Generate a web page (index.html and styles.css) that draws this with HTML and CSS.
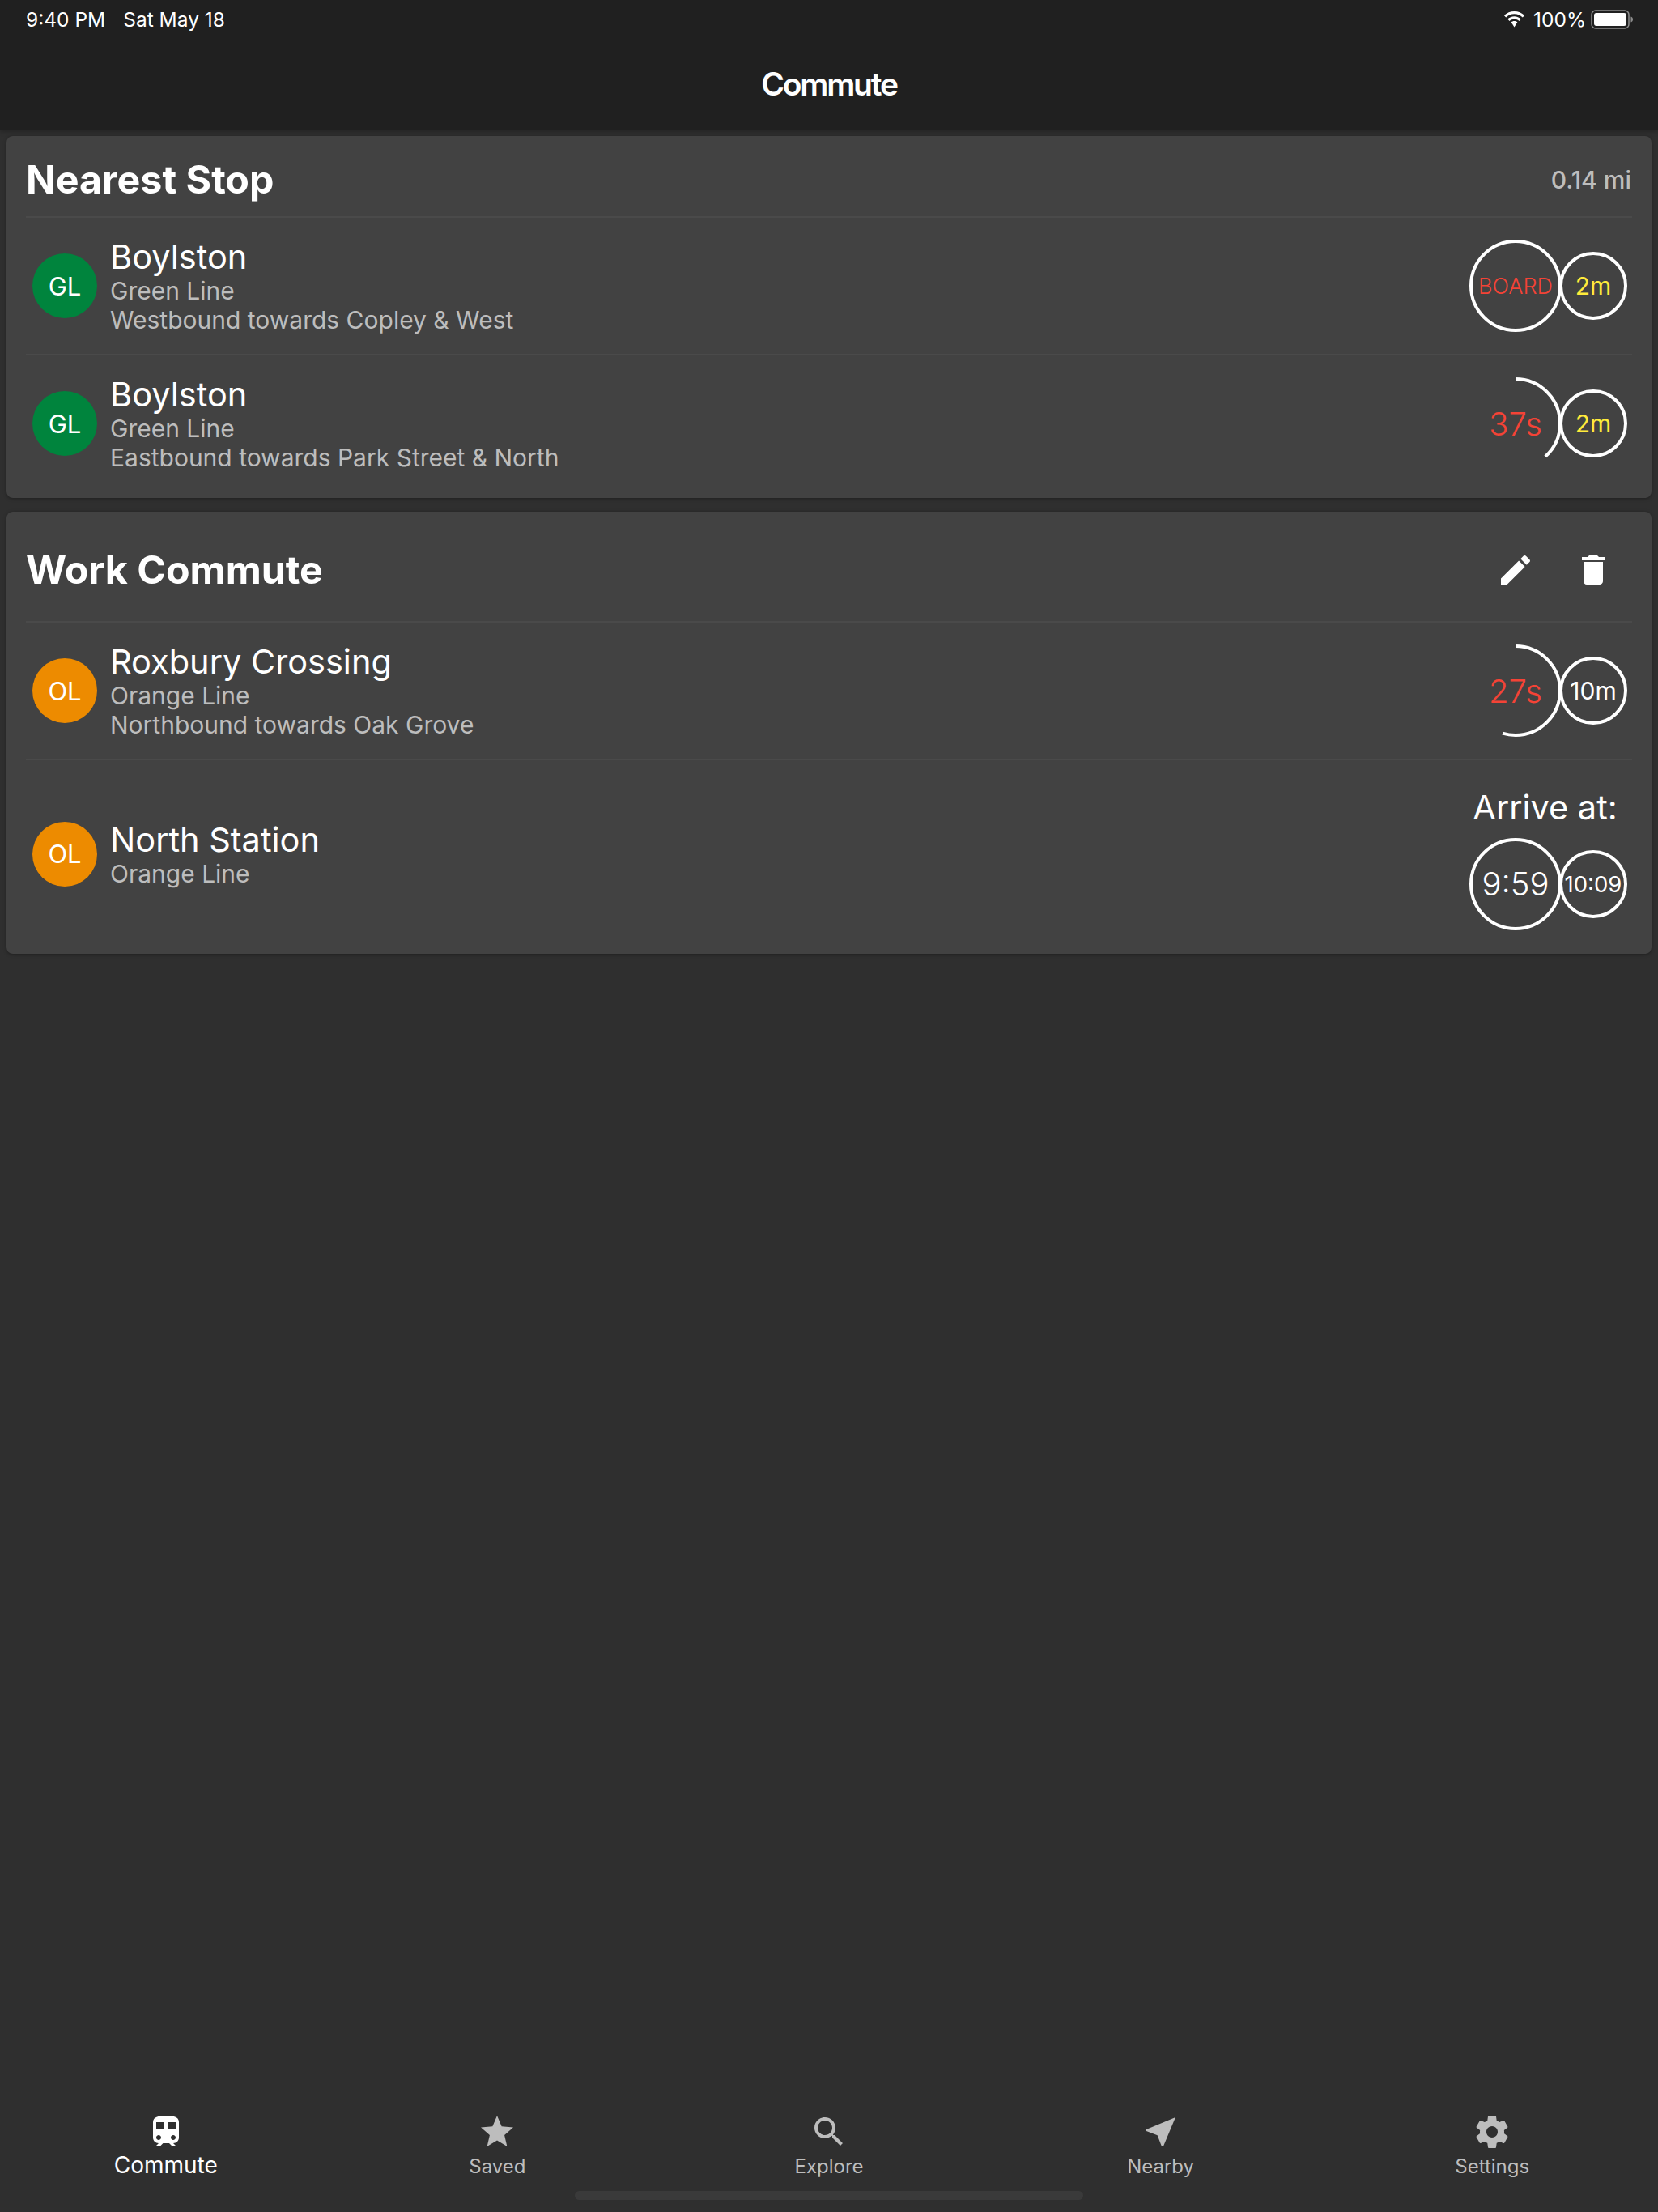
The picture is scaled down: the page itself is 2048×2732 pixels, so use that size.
FILE: index.html
```html
<!DOCTYPE html>
<html lang="en">
<head>
    <meta charset="UTF-8">
    <meta name="viewport" content="width=device-width, initial-scale=1.0">
    <title>Commute</title>
    <link rel="stylesheet" href="styles.css">
</head>
<body>
    <header class="app-header">
        <div class="status-bar">
            <div class="status-left">
                <span>9:40 PM</span>
                <span>Sat May 18</span>
            </div>
            <div class="status-right">
                <svg class="wifi" viewBox="0 0 27 19" width="29" height="20">
                    <path d="M13.5 3.2c3.8 0 7.2 1.5 9.8 3.9l2.2-2.4C22.3 1.8 18.1 0 13.5 0S4.7 1.8 1.500 4.700l2.200 2.400c2.600-2.400 6-3.900 9.800-3.900z" fill="#fff"/>
                    <path d="M13.500 9.300c2.200 0 4.200.8 5.700 2.200l2.200-2.400c-2.100-1.900-4.900-3.100-7.900-3.100s-5.800 1.200-7.900 3.100l2.200 2.400c1.500-1.400 3.500-2.200 5.700-2.200z" fill="#fff"/>
                    <path d="M13.500 11.500c-1.400 0-2.600.5-3.600 1.400l3.600 5.600 3.600-5.600c-1-.9-2.200-1.400-3.600-1.400z" fill="#fff"/>
                </svg>
                <span class="battery-level">100%</span>
                <svg class="battery" viewBox="0 0 53 24" width="53" height="24">
                    <rect x="1" y="1" width="46" height="22" rx="5" fill="none" stroke="#8c8c8c" stroke-width="1.500"/>
                    <rect x="4" y="4" width="40" height="16" rx="3" fill="#fff"/>
                    <path d="M49.500 8.500c1.500.4 2.500 1.800 2.500 3.500s-1 3.100-2.500 3.500z" fill="#8c8c8c"/>
                </svg>
            </div>
        </div>
        <h1 class="app-title">Commute</h1>
    </header>

    <main class="content">
        <section class="card">
            <div class="card-head head-nearest">
                <h2>Nearest Stop</h2>
                <span class="distance">0.14 mi</span>
            </div>
            <div class="row">
                <div class="line-badge green">GL</div>
                <div class="stop-info">
                    <div class="stop-name">Boylston</div>
                    <div class="stop-sub">Green Line</div>
                    <div class="stop-sub">Westbound towards Copley &amp; West</div>
                </div>
                <div class="times">
                    <div class="ring ring-big">
                        <svg viewBox="0 0 114 114"><circle cx="57" cy="57" r="55" class="ring-line"/></svg>
                        <span class="ring-text board red">BOARD</span>
                    </div>
                    <div class="ring ring-small">
                        <svg viewBox="0 0 84 84"><circle cx="42" cy="42" r="40" class="ring-line"/></svg>
                        <span class="ring-text yellow">2m</span>
                    </div>
                </div>
            </div>
            <div class="row">
                <div class="line-badge green">GL</div>
                <div class="stop-info">
                    <div class="stop-name">Boylston</div>
                    <div class="stop-sub">Green Line</div>
                    <div class="stop-sub">Eastbound towards Park Street &amp; North</div>
                </div>
                <div class="times">
                    <div class="ring ring-big">
                        <svg viewBox="0 0 114 114"><circle cx="57" cy="57" r="55" class="ring-line" pathLength="360" stroke-dasharray="138 360" transform="rotate(-90 57 57)"/></svg>
                        <span class="ring-text big-text red">37s</span>
                    </div>
                    <div class="ring ring-small">
                        <svg viewBox="0 0 84 84"><circle cx="42" cy="42" r="40" class="ring-line"/></svg>
                        <span class="ring-text yellow">2m</span>
                    </div>
                </div>
            </div>
        </section>

        <section class="card">
            <div class="card-head head-work">
                <h2>Work Commute</h2>
                <div class="actions">
                    <svg viewBox="0 0 24 24" width="48" height="48"><path fill="#fff" d="M3 17.250V21h3.750L17.810 9.940l-3.750-3.750L3 17.250zM20.710 7.040c.39-.39.39-1.020 0-1.410l-2.340-2.340c-.39-.39-1.020-.39-1.410 0l-1.830 1.830 3.750 3.750 1.830-1.830z"/></svg>
                    <svg viewBox="0 0 24 24" width="48" height="48"><path fill="#fff" d="M6 19c0 1.100.9 2 2 2h8c1.100 0 2-.9 2-2V7H6v12zM19 4h-3.500l-1-1h-5l-1 1H5v2h14V4z"/></svg>
                </div>
            </div>
            <div class="row">
                <div class="line-badge orange">OL</div>
                <div class="stop-info">
                    <div class="stop-name">Roxbury Crossing</div>
                    <div class="stop-sub">Orange Line</div>
                    <div class="stop-sub">Northbound towards Oak Grove</div>
                </div>
                <div class="times">
                    <div class="ring ring-big">
                        <svg viewBox="0 0 114 114"><circle cx="57" cy="57" r="55" class="ring-line" pathLength="360" stroke-dasharray="197 360" transform="rotate(-90 57 57)"/></svg>
                        <span class="ring-text big-text red">27s</span>
                    </div>
                    <div class="ring ring-small">
                        <svg viewBox="0 0 84 84"><circle cx="42" cy="42" r="40" class="ring-line"/></svg>
                        <span class="ring-text">10m</span>
                    </div>
                </div>
            </div>
            <div class="row row-tall">
                <div class="line-badge orange">OL</div>
                <div class="stop-info">
                    <div class="stop-name">North Station</div>
                    <div class="stop-sub">Orange Line</div>
                </div>
                <div class="arrive">
                    <div class="arrive-label">Arrive at:</div>
                    <div class="times">
                        <div class="ring ring-big">
                            <svg viewBox="0 0 114 114"><circle cx="57" cy="57" r="55" class="ring-line"/></svg>
                            <span class="ring-text big-text">9:59</span>
                        </div>
                        <div class="ring ring-small">
                            <svg viewBox="0 0 84 84"><circle cx="42" cy="42" r="40" class="ring-line"/></svg>
                            <span class="ring-text clock">10:09</span>
                        </div>
                    </div>
                </div>
            </div>
        </section>
    </main>

    <nav class="tab-bar">
        <a class="tab active">
            <svg viewBox="0 0 24 24" width="48" height="48"><path d="M12 2c-4 0-8 .5-8 4v9.500C4 17.430 5.570 19 7.500 19L6 20.500v.5h2.230l2-2H14l2 2h2v-.5L16.500 19c1.930 0 3.500-1.570 3.500-3.500V6c0-3.500-3.580-4-8-4zM7.500 17c-.83 0-1.500-.67-1.500-1.500S6.670 14 7.500 14s1.500.67 1.500 1.500S8.330 17 7.500 17zm3.500-7H6V6h5v4zm2 0V6h5v4h-5zm3.500 7c-.83 0-1.500-.67-1.500-1.500s.67-1.500 1.500-1.500 1.500.67 1.500 1.500-.67 1.500-1.500 1.500z"/></svg>
            <span>Commute</span>
        </a>
        <a class="tab">
            <svg viewBox="0 0 24 24" width="48" height="48"><path d="M12 17.270L18.180 21l-1.640-7.030L22 9.240l-7.190-.61L12 2 9.190 8.630 2 9.240l5.460 4.730L5.820 21z"/></svg>
            <span>Saved</span>
        </a>
        <a class="tab">
            <svg viewBox="0 0 24 24" width="48" height="48"><path d="M15.500 14h-.79l-.28-.27C15.410 12.590 16 11.110 16 9.500 16 5.910 13.090 3 9.500 3S3 5.910 3 9.500 5.910 16 9.500 16c1.610 0 3.090-.59 4.230-1.570l.27.28v.79l5 4.990L20.490 19l-4.990-5zm-6 0C7.010 14 5 11.990 5 9.500S7.010 5 9.500 5 14 7.010 14 9.500 11.990 14 9.500 14z"/></svg>
            <span>Explore</span>
        </a>
        <a class="tab">
            <svg viewBox="0 0 24 24" width="48" height="48"><path d="M21 3L3 10.530v.98l6.840 2.650L12.480 21h.98L21 3z"/></svg>
            <span>Nearby</span>
        </a>
        <a class="tab">
            <svg viewBox="0 0 24 24" width="48" height="48"><path d="M19.430 12.980c.04-.32.07-.64.07-.98s-.03-.66-.07-.98l2.110-1.650c.19-.15.24-.42.12-.64l-2-3.460c-.12-.22-.39-.3-.61-.22l-2.490 1c-.52-.4-1.080-.73-1.690-.98l-.38-2.650C14.460 2.180 14.250 2 14 2h-4c-.25 0-.46.18-.49.42l-.38 2.650c-.61.25-1.170.59-1.690.98l-2.490-1c-.23-.09-.49 0-.61.22l-2 3.460c-.13.22-.07.49.12.64l2.110 1.650c-.04.32-.07.65-.07.98s.03.66.07.98l-2.110 1.650c-.19.15-.24.42-.12.64l2 3.460c.12.22.39.3.61.22l2.490-1c.52.4 1.080.73 1.690.98l.38 2.650c.03.24.24.42.49.42h4c.25 0 .46-.18.49-.42l.38-2.650c.61-.25 1.170-.59 1.690-.98l2.490 1c.23.09.49 0 .61-.22l2-3.460c.12-.22.07-.49-.12-.64l-2.110-1.650zM12 15.500c-1.930 0-3.500-1.570-3.500-3.500s1.570-3.500 3.500-3.500 3.500 1.570 3.500 3.500-1.570 3.500-3.500 3.500z"/></svg>
            <span>Settings</span>
        </a>
        <div class="home-indicator"></div>
    </nav>
</body>
</html>
```

FILE: styles.css
```css
body {
    font-family: Inter, "Noto Sans", sans-serif;
    background-color: #2f2f2f;
    color: white;
    margin: 0;
    padding: 0;
    height: 2732px;
    display: flex;
    flex-direction: column;
    overflow: hidden;
}

.app-header {
    background-color: #202020;
    height: 160px;
    flex: none;
    box-shadow: 0 2px 6px rgba(0, 0, 0, 0.3);
}

.status-bar {
    display: flex;
    justify-content: space-between;
    align-items: center;
    height: 48px;
    padding: 0 30px 0 32px;
    font-size: 24.5px;
}

.status-left {
    display: flex;
    gap: 22px;
}

.status-right {
    display: flex;
    align-items: center;
    gap: 9px;
}

.battery-level {
    margin-right: -3px;
}

.app-title {
    font-size: 39px;
    font-weight: 600;
    letter-spacing: -2.2px;
    text-align: center;
    line-height: 48px;
    margin: 32px 0 0;
}

.content {
    flex: 1;
    padding: 8px 8px 0;
}

.card {
    background-color: #424242;
    border-radius: 8px;
    padding: 0 24px 8px;
    margin-bottom: 17px;
    box-shadow: 0 1px 4px rgba(0, 0, 0, 0.35);
}

.card-head {
    display: flex;
    justify-content: space-between;
    align-items: center;
    box-sizing: border-box;
    padding-top: 8px;
}

.head-nearest {
    height: 99px;
}

.head-work {
    height: 135px;
}

.card-head h2 {
    font-size: 48.3px;
    font-weight: 700;
    margin: 0;
}

.distance {
    font-size: 30px;
    font-weight: 500;
    color: #bdbdbd;
    margin-right: 1px;
}

.actions {
    display: flex;
    gap: 48px;
    padding-right: 24px;
    margin-bottom: -1px;
}

.row {
    display: flex;
    align-items: center;
    box-sizing: border-box;
    height: 170px;
    padding: 0 6px 0 8px;
    border-top: 2px solid #4a4a4a;
}

.row-tall {
    height: 233px;
}

.line-badge {
    width: 80px;
    height: 80px;
    border-radius: 50%;
    display: flex;
    align-items: center;
    justify-content: center;
    font-size: 31px;
    flex: none;
    margin-right: 16px;
}

.green {
    background-color: #00843d;
}

.orange {
    background-color: #ed8b00;
}

.stop-info {
    flex: 1;
}

.stop-name {
    font-size: 41.5px;
    line-height: 48px;
}

.stop-sub {
    font-size: 30px;
    line-height: 36px;
    color: #bdbdbd;
}

.times {
    display: flex;
    align-items: center;
}

.ring {
    display: grid;
    place-items: center;
    flex: none;
}

.ring svg,
.ring-text {
    grid-area: 1 / 1;
}

.ring svg {
    display: block;
    width: 100%;
    height: 100%;
}

.ring-big {
    width: 114px;
    height: 114px;
}

.ring-small {
    width: 84px;
    height: 84px;
    margin-left: -3px;
}

.ring-line {
    fill: none;
    stroke: white;
    stroke-width: 4;
}

.ring-text {
    font-size: 30px;
    font-weight: 400;
}

.big-text {
    font-size: 40px;
    font-weight: 300;
}

.board {
    font-size: 27px;
    font-weight: 300;
}

.clock {
    font-size: 27.5px;
    font-weight: 400;
}

.red {
    color: #f44336;
}

.yellow {
    color: #ffeb3b;
}

.arrive {
    display: flex;
    flex-direction: column;
    align-items: center;
}

.arrive-label {
    font-size: 41.5px;
    line-height: 72px;
    margin: 0 0 2px -8px;
}

.tab-bar {
    position: relative;
    flex: none;
    display: grid;
    grid-template-columns: repeat(5, 1fr);
    height: 123px;
}

.tab {
    display: flex;
    flex-direction: column;
    align-items: center;
    color: #bdbdbd;
    fill: #bdbdbd;
    font-size: 24px;
}

.tab svg {
    display: block;
}

.tab span {
    line-height: 30px;
    margin-top: 4px;
}

.tab.active {
    color: white;
    fill: white;
    font-size: 28px;
}

.tab.active span {
    margin-top: 2px;
}

.home-indicator {
    position: absolute;
    left: 710px;
    bottom: 15px;
    width: 628px;
    height: 11px;
    border-radius: 6px;
    background-color: #3a3a3a;
}
```
